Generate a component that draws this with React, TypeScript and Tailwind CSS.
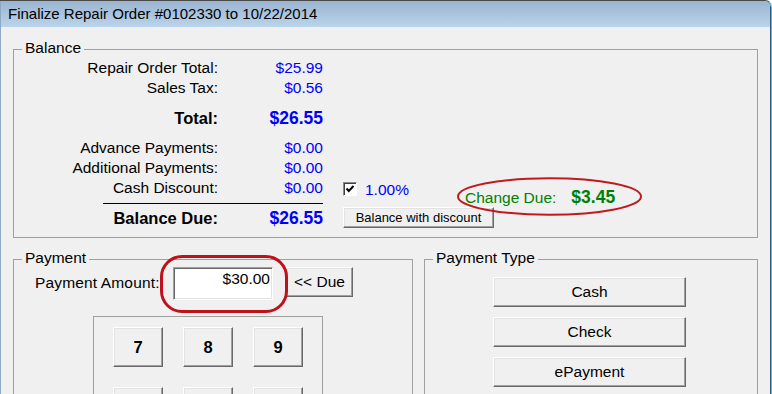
import React from "react";

const btn =
  "flex items-center justify-center bg-[#f0f0f0] border border-t-white border-l-white border-b-[#696969] border-r-[#696969] shadow-[inset_-1px_-1px_0_#a0a0a0,inset_1px_1px_0_#e3e3e3] text-black";

function Row({
  label,
  value,
  bold = false,
}: {
  label: string;
  value: string;
  bold?: boolean;
}) {
  return (
    <>
      <div
        className={`h-[20px] leading-[20px] text-right whitespace-nowrap ${
          bold ? "font-bold text-[16.5px]" : "text-[15.5px]"
        }`}
      >
        {label}
      </div>
      <div
        className={`h-[20px] leading-[20px] text-right whitespace-nowrap text-[#0000ff] ${
          bold ? "font-bold text-[17.5px]" : "text-[15.5px]"
        }`}
      >
        {value}
      </div>
    </>
  );
}

function Spacer() {
  return <div className="col-span-2 h-[10px]" />;
}

export default function App() {
  return (
    <div className="w-[772px] h-[394px] overflow-hidden bg-[#f0f0f0] font-['Liberation_Sans',Arial,sans-serif] text-black border-t border-t-[#4a4a4a] border-r border-r-[#3ec0f0] rounded-tr-[7px]">
      <div className="h-full flex flex-col border-l border-l-[#8ea9c6] border-r border-r-[#2c5a78] rounded-tr-[6px] overflow-hidden">
        {/* Title bar */}
        <div className="h-[26px] shrink-0 bg-linear-to-b from-[#9bb5d1] to-[#bad4eb] pl-[7px] leading-[26px] text-[15px] text-black whitespace-nowrap">
          Finalize Repair Order #0102330 to 10/22/2014
        </div>

        {/* Content */}
        <div className="pl-[12px]">
          {/* Balance */}
          <fieldset className="mt-[12px] w-[745px] border border-[#a0a0a0]">
            <legend className="ml-[8px] px-[3px] pb-[3px] text-[15.5px] leading-[18px]">
              Balance
            </legend>
            <div className="flex -mt-[2px] pb-[9px]">
              <div className="grid grid-cols-[204px_105px] w-[309px]">
                <Row label="Repair Order Total:" value="$25.99" />
                <Row label="Sales Tax:" value="$0.56" />
                <Spacer />
                <Row label="Total:" value="$26.55" bold />
                <Spacer />
                <Row label="Advance Payments:" value="$0.00" />
                <Row label="Additional Payments:" value="$0.00" />
                <Row label="Cash Discount:" value="$0.00" />
                <div className="col-span-2 h-[10px] pt-[5px] pl-[89px]">
                  <div className="h-px bg-black" />
                </div>
                <Row label="Balance Due:" value="$26.55" bold />
              </div>

              <div className="relative ml-[20px] self-end flex flex-col">
                <div className="flex h-[25px]">
                  <div className="w-[122px] flex items-start">
                    <span className="w-[14px] h-[14px] shrink-0 bg-white border border-t-[#8a8a8a] border-l-[#8a8a8a] border-b-white border-r-white shadow-[inset_1px_1px_0_#404040] flex items-center justify-center">
                      <svg width="10" height="10" viewBox="0 0 10 10">
                        <path
                          d="M1.5 4.5 L3.8 7 L8.5 2"
                          fill="none"
                          stroke="#000"
                          strokeWidth="1.9"
                        />
                      </svg>
                    </span>
                    <span className="ml-[8px] -mt-[2px] leading-[20px] text-[15.5px] text-[#0000ff]">
                      1.00%
                    </span>
                  </div>
                  <div className="mt-[5px] h-[20px] flex items-baseline whitespace-nowrap text-[#008000]">
                    <span className="text-[15.5px] leading-[20px]">Change Due:</span>
                    <span className="ml-[15px] font-bold text-[17.5px] leading-[20px]">
                      $3.45
                    </span>
                  </div>
                </div>
                <button type="button" className={`${btn} w-[151px] h-[21px] text-[13px] leading-[16px]`}>
                  Balance with discount
                </button>
                <svg
                  className="absolute left-[114px] -top-[5px] pointer-events-none"
                  width="185"
                  height="39"
                  viewBox="0 0 185 39"
                >
                  <ellipse
                    cx="92.5"
                    cy="19.5"
                    rx="91.5"
                    ry="18.3"
                    fill="none"
                    stroke="#c01a20"
                    strokeWidth="2"
                  />
                </svg>
              </div>
            </div>
          </fieldset>

          {/* Payment + Payment Type */}
          <div className="flex items-start gap-[11px] mt-[11px]">
            <fieldset className="w-[400px] h-[220px] border border-[#a0a0a0]">
              <legend className="ml-[8px] px-[3px] pb-[3px] text-[15.5px] leading-[18px]">
                Payment
              </legend>
              <div className="relative flex items-start -mt-[3px]">
                <div className="ml-[21px] w-[138px] mt-[6px] leading-[20px] text-[15.5px] tracking-[0.15px] whitespace-nowrap">
                  Payment Amount:
                </div>
                <div className="w-[100px] h-[33px] bg-white border border-t-[#a0a0a0] border-l-[#a0a0a0] border-b-white border-r-white shadow-[inset_1px_1px_0_#696969,inset_-1px_-1px_0_#e3e3e3] text-right pr-[2px] pt-[1px] leading-[20px] text-[15.5px]">
                  $30.00
                </div>
                <button type="button" className={`${btn} ml-[13px] w-[67px] h-[30px] text-[15.5px]`}>
                  {"<< Due"}
                </button>
                <div className="absolute left-[146px] -top-[12px] w-[128px] h-[58px] border-[3px] border-[#c0101a] rounded-[22px] pointer-events-none" />
              </div>

              <div className="ml-[79px] mt-[16px] w-[230px] h-[200px] border border-[#a0a0a0] pt-[10px] pl-[19px] grid grid-cols-[50px_50px_50px] auto-rows-[40px] gap-[20px]">
                {["7", "8", "9", "", "", ""].map((d, i) => (
                  <button
                    key={i}
                    type="button"
                    className={`${btn} w-[50px] h-[40px] font-bold text-[16.5px]`}
                  >
                    {d}
                  </button>
                ))}
              </div>
            </fieldset>

            <fieldset className="w-[334px] h-[220px] border border-[#a0a0a0]">
              <legend className="ml-[8px] px-[3px] pb-[3px] text-[15.5px] leading-[18px]">
                Payment Type
              </legend>
              <div className="ml-[68px] mt-[7px] flex flex-col gap-[10px]">
                {["Cash", "Check", "ePayment"].map((t) => (
                  <button
                    key={t}
                    type="button"
                    className={`${btn} w-[193px] h-[30px] text-[15.5px]`}
                  >
                    {t}
                  </button>
                ))}
              </div>
            </fieldset>
          </div>
        </div>
      </div>
    </div>
  );
}
